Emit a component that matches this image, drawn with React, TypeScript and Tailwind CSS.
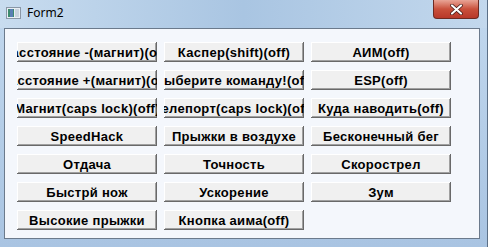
import React from "react";

const buttons: (string | null)[][] = [
  ["Расстояние -(магнит)(off)", "Каспер(shift)(off)", "АИМ(off)"],
  ["Расстояние +(магнит)(off)", "Выберите команду!(off)", "ESP(off)"],
  ["Магнит(caps lock)(off)", "Телепорт(caps lock)(off)", "Куда наводить(off)"],
  ["SpeedHack", "Прыжки в воздухе", "Бесконечный бег"],
  ["Отдача", "Точность", "Скорострел"],
  ["Быстрй нож", "Ускорение", "Зум"],
  ["Высокие прыжки", "Кнопка аима(off)", null],
];

function WinButton({ label }: { label: string }) {
  return (
    <div className="w-[140px] h-[20px] flex items-center justify-center overflow-hidden whitespace-nowrap bg-[#f0f0f0] shadow-[inset_-1px_-1px_#696969,inset_1px_1px_#ffffff,inset_-2px_-2px_#a0a0a0] text-[13px] tracking-[0.3px] font-bold text-black font-['Liberation_Sans',Arial,sans-serif] leading-none">
      {label}
    </div>
  );
}

export default function App() {
  return (
    <div className="w-[488px] h-[247px] flex flex-col bg-gradient-to-b from-[#c2d8ee] via-[#b5cee8] to-[#a9c4e2] border-r border-[#5b6f86] overflow-hidden">
      {/* title bar */}
      <div className="h-[28px] flex items-start bg-gradient-to-r from-[#c8dcef] via-[#a9c5e2] to-[#c3d8ed]">
        <div className="flex items-center gap-[6px] pl-[6px] pt-[7px]">
          <svg width="15" height="12" viewBox="0 0 15 12">
            <rect x="0.5" y="0.5" width="14" height="11" fill="#e8eef4" stroke="#8a97a6" />
            <rect x="2" y="2" width="6" height="8" fill="#3d8a6e" />
            <rect x="4" y="2" width="3" height="8" fill="#5a7fb4" />
            <rect x="9" y="2" width="4" height="8" fill="#c9d3de" />
          </svg>
          <span className="text-[12px] text-black font-['Noto_Sans',sans-serif] leading-none">Form2</span>
        </div>
        <div className="ml-auto mr-[8px] w-[46px] h-[19px] rounded-b-[4px] border border-t-0 border-[#6e2a22] bg-gradient-to-b from-[#e8a496] via-[#c9503c] to-[#b8382a] flex items-center justify-center">
          <svg width="13" height="11" viewBox="0 0 13 11">
            <path d="M2 1.5 L11 9.5 M11 1.5 L2 9.5" stroke="#3b1410" strokeWidth="3.6" strokeLinecap="round" />
            <path d="M2 1.5 L11 9.5 M11 1.5 L2 9.5" stroke="#ffffff" strokeWidth="2.2" strokeLinecap="round" />
          </svg>
        </div>
      </div>
      {/* client area */}
      <div className="ml-[4px] mr-[7px] h-[211px] border border-[#6b7a8c] bg-[#f4f7fc] pl-[12px] pt-[13px]">
        <div className="flex flex-col gap-[8px]">
          {buttons.map((row, i) => (
            <div key={i} className="flex gap-[7px]">
              {row.map((b, j) => (b ? <WinButton key={j} label={b} /> : <div key={j} className="w-[140px]" />))}
            </div>
          ))}
        </div>
      </div>
    </div>
  );
}
